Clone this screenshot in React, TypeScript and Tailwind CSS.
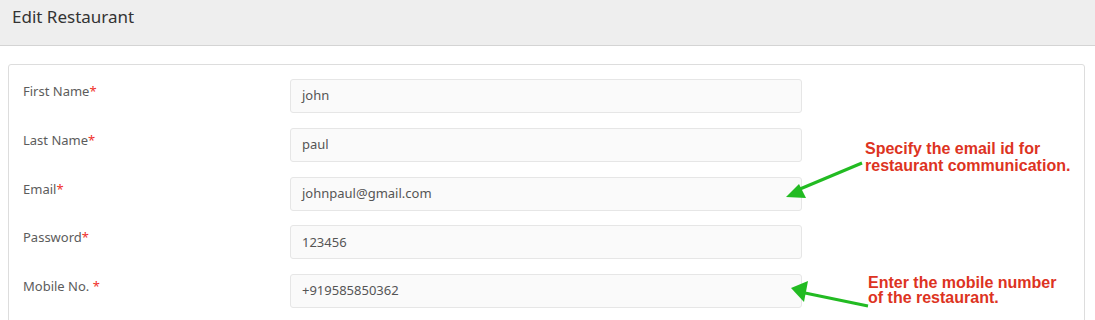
import React from 'react';

const fields = [
  { label: 'First Name', value: 'john', star: '*' },
  { label: 'Last Name', value: 'paul', star: '*' },
  { label: 'Email', value: 'johnpaul@gmail.com', star: '*' },
  { label: 'Password', value: '123456', star: '*' },
  { label: 'Mobile No. ', value: '+919585850362', star: '*' },
];

export default function App() {
  return (
    <div className="w-[1095px] h-[320px] overflow-hidden bg-white font-['Noto_Sans',sans-serif]">
      {/* Page header */}
      <div className="h-[46px] bg-[#eeeeee] border-b border-[#d4d4d4] px-3 flex items-center">
        <h1 className="text-[17px] text-[#333] pb-[12px]">Edit Restaurant</h1>
      </div>

      <div className="pl-2 pr-[10px] pt-[18px]">
        <div className="relative border border-[#dddddd] rounded-[3px] pt-[14px] pl-[14px] pr-4 pb-4">
          <div className="flex flex-col gap-[14.75px]">
            {fields.map((f) => (
              <div key={f.label} className="flex items-start">
                <label className="w-[267px] pt-[3px] text-[13px] text-[#5c5c5c]">
                  {f.label}
                  <span className="text-[#f0302a]">{f.star}</span>
                </label>
                <div className="w-[512px] h-[34px] bg-[#fafafa] border border-[#e6e6e6] rounded-[3px] pl-[11px] flex items-center text-[13px] text-[#555]">
                  {f.value}
                </div>
              </div>
            ))}
          </div>

          {/* Annotations */}
          <div className="absolute left-[856px] top-[75px] font-['Liberation_Sans',Arial,sans-serif] font-bold text-[16px] leading-[17px] text-[#dd3322]">
            <div>Specify the email id for</div>
            <div>restaurant communication.</div>
          </div>
          <div className="absolute left-[859px] top-[210px] font-['Liberation_Sans',Arial,sans-serif] font-bold text-[16px] leading-[15px] text-[#dd3322]">
            <div>Enter the mobile number</div>
            <div>of the restaurant.</div>
          </div>
          <svg className="absolute left-0 top-0 pointer-events-none" width="1077" height="260" viewBox="9 65 1077 260">
            <line x1="862" y1="163" x2="800" y2="189" stroke="#22bb22" strokeWidth="3" />
            <polygon points="786,197 799,184 806,198" fill="#22bb22" />
            <line x1="868" y1="306" x2="805" y2="293" stroke="#22bb22" strokeWidth="3" />
            <polygon points="791,288 808,281 804,302" fill="#22bb22" />
          </svg>
        </div>
      </div>
    </div>
  );
}
